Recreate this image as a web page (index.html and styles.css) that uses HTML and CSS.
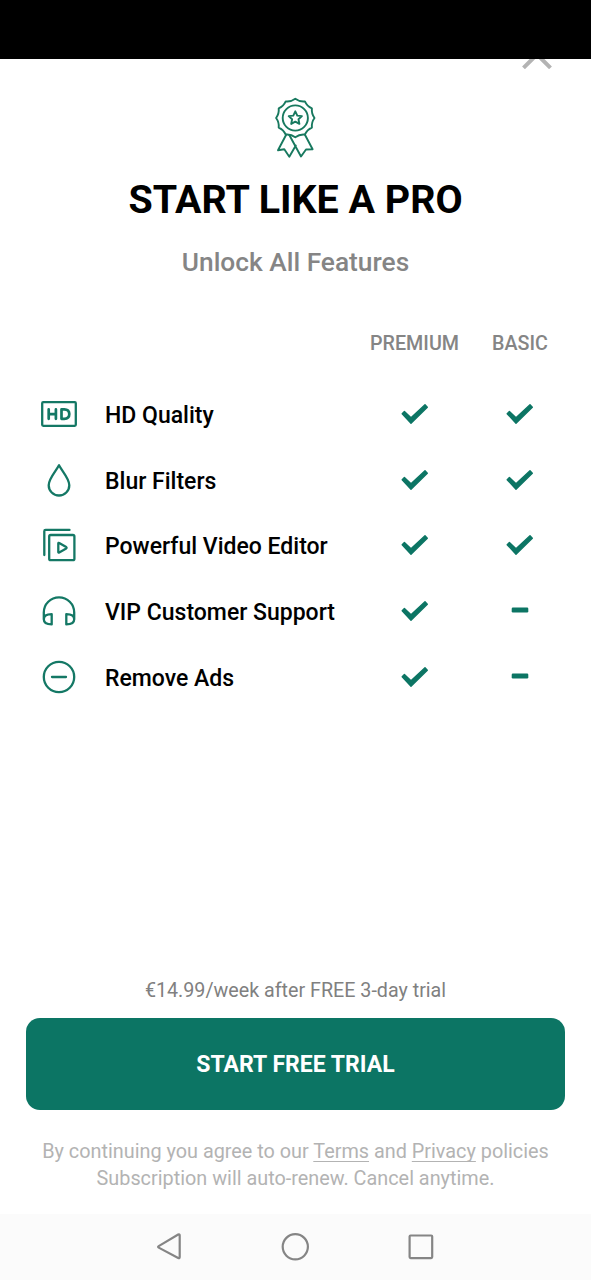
FILE: index.html
```html
<!DOCTYPE html>
<html lang="en">
<head>
<meta charset="utf-8">
<title>Start like a pro</title>
<link rel="stylesheet" href="styles.css">
</head>
<body>
<svg class="defs" aria-hidden="true">
  <symbol id="check" viewBox="0 0 28 22"><path d="M1.200 10.700 3.400 8.500 10 14.700 24 1.700 26.300 4.200 10 20.200Z" fill="currentColor" stroke="currentColor" stroke-width="1.400" stroke-linejoin="round"/></symbol>
  <symbol id="dash" viewBox="0 0 28 22"><rect x="5.700" y="7.500" width="16.600" height="5" rx="1.200" fill="currentColor"/></symbol>
</svg>
<div class="screen">
  <div class="status"></div>
  <div class="closebar"><svg class="close" viewBox="0 0 30 10"><path d="M1.500 8.800 15 -4.500 28.500 8.800" /></svg></div>
  <main class="content">
    <svg class="medal" viewBox="-21.300 -21 42 62">
      <path d="M0-19.200Q4.300-16.040 9.600-16.600Q11.740-11.740 16.600-9.600Q16.040-4.300 19.200 0Q16.040 4.300 16.600 9.600Q11.740 11.740 9.600 16.600Q4.300 16.040 0 19.200Q-4.300 16.040-9.600 16.600Q-11.740 11.740-16.600 9.600Q-16.040 4.300-19.200 0Q-16.040-4.300-16.600-9.600Q-11.740-11.740-9.600-16.600Q-4.300-16.040 0-19.200Z"/>
      <circle r="12.600"/>
      <path d="M0-6.700 2-2.400 6.600-1.900 3.200 1.300 4.100 5.900 0 3.600-4.100 5.900-3.200 1.300-6.600-1.900-2-2.400Z"/>
      <path d="M-9 16.500-17.300 32.300-11 31.300-6 38.800 .500 27.500M9.500 16.500 17.300 31.300 10.700 31.500 5.700 38.500-6 17"/>
    </svg>
    <h1 class="title">START LIKE A PRO</h1>
    <p class="subtitle">Unlock All Features</p>
    <div class="row head"><span class="spacer"></span><span>PREMIUM</span><span>BASIC</span></div>
    <div class="row">
      <svg class="icon" viewBox="0 0 40 40"><rect x="3.200" y="8.200" width="33.600" height="23.600" rx="1"/><path class="bold" d="M9.700 15.400v9.400M16.900 15.400v9.400M9.700 20.100h7.200M22.500 15.400v9.400h2.800q5 0 5-4.700t-5-4.700z"/></svg>
      <span class="label">HD Quality</span><svg class="mark"><use href="#check"/></svg><svg class="mark"><use href="#check"/></svg>
    </div>
    <div class="row">
      <svg class="icon" viewBox="0 0 40 40"><path d="M20 5.300C17 11 9.700 18.500 9.700 25.200A10.300 10.300 0 0 0 30.300 25.200C30.300 18.500 23 11 20 5.300Z"/></svg>
      <span class="label">Blur Filters</span><svg class="mark"><use href="#check"/></svg><svg class="mark"><use href="#check"/></svg>
    </div>
    <div class="row">
      <svg class="icon" viewBox="0 0 40 40"><path d="M5.300 30V6.200Q5.300 4.900 6.600 4.900H30.500"/><rect x="10.200" y="10" width="25.200" height="25.200" rx="1.500"/><path d="M19.300 18.500v8.400q0 1 .9.500l7-4q.8-.7 0-1.300l-7-4.100q-.9-.5-.9.500z"/></svg>
      <span class="label">Powerful Video Editor</span><svg class="mark"><use href="#check"/></svg><svg class="mark"><use href="#check"/></svg>
    </div>
    <div class="row">
      <svg class="icon" viewBox="0 0 40 40"><path d="M4.800 28.500V21.500a15.200 15.200 0 0 1 30.400 0V28.500M12.700 23.200v10.200q-7.900 0-7.900-5.100 0-5.100 7.900-5.100zM27.300 23.200v10.200q7.900 0 7.900-5.100 0-5.100-7.900-5.100z"/></svg>
      <span class="label">VIP Customer Support</span><svg class="mark"><use href="#check"/></svg><svg class="mark"><use href="#dash"/></svg>
    </div>
    <div class="row">
      <svg class="icon" viewBox="0 0 40 40"><circle cx="20" cy="20" r="15.200"/><path d="M13 20h14"/></svg>
      <span class="label">Remove Ads</span><svg class="mark"><use href="#check"/></svg><svg class="mark"><use href="#dash"/></svg>
    </div>
  </main>
  <footer class="footer">
    <p class="price">€14.99/week after FREE 3-day trial</p>
    <button class="cta">START FREE TRIAL</button>
    <p class="legal">By continuing you agree to our <a>Terms</a> and <a>Privacy</a> policies<br>Subscription will auto-renew. Cancel anytime.</p>
  </footer>
  <nav class="nav">
    <svg viewBox="0 0 30 30"><path d="M3.700 14.100 23.200 2.500Q24.700 2 24.700 3.500V25Q24.700 26.700 23.200 26L3.700 15.600Q2.500 14.800 3.700 14.100Z"/></svg>
    <svg viewBox="0 0 30 30"><circle cx="15.300" cy="14.800" r="12.600"/></svg>
    <svg viewBox="0 0 30 30"><rect x="3.600" y="3.500" width="22.600" height="22.600" rx="1"/></svg>
  </nav>
</div>
</body>
</html>
```
FILE: styles.css
```css
* { box-sizing: border-box; }
body { margin: 0; background: #fff; font-family: Roboto, "Liberation Sans", sans-serif; }
h1, p { margin: 0; }
.defs { display: none; }
.screen { width: 591px; height: 1280px; display: flex; flex-direction: column; overflow: hidden; }
.status { height: 59px; background: #000; }
.closebar { height: 10px; display: flex; justify-content: flex-end; padding-right: 39px; }
.close { width: 30px; height: 10px; fill: none; stroke: #b3b3b3; stroke-width: 4; }
.content { flex: 1; display: flex; flex-direction: column; }
.medal { width: 42px; height: 62px; margin: 28px 0 0 274px; fill: none; stroke: #18795f; stroke-width: 1.900; stroke-linejoin: round; stroke-linecap: round; }
.title { margin-top: 18px; text-align: center; font-size: 39.400px; line-height: 46px; font-weight: 700; white-space: nowrap; }
.subtitle { margin-top: 24px; text-align: center; font-size: 26.300px; line-height: 30px; font-weight: 500; color: #858585; }
.row { display: grid; grid-template-columns: 66px 1fr 106px 105px; align-items: center; justify-items: center; height: 65.700px; margin: 0 18.500px 0 26px; color: #0c7564; }
.head { height: 24px; margin-top: 54px; margin-bottom: 26px; font-size: 19.700px; font-weight: 500; color: #858585; }
.spacer { grid-column: span 2; }
.icon { width: 40px; height: 40px; fill: none; stroke: #147865; stroke-width: 2.300; stroke-linecap: round; stroke-linejoin: round; }
.icon .bold { stroke-width: 2.700; }
.label { justify-self: start; padding: 4px 0 0 13px; font-size: 23px; line-height: 28px; font-weight: 500; color: #000; white-space: nowrap; }
.mark { width: 28px; height: 22px; }
.footer { padding: 0 26px; text-align: center; }
.price { font-size: 19.700px; line-height: 24px; color: #808080; }
.cta { display: block; width: 100%; height: 92px; margin-top: 15px; border: 0; border-radius: 14px; background: #0c7564; color: #fff; font: 700 23px Roboto, "Liberation Sans", sans-serif; }
.legal { margin: 28px -20px 22px; font-size: 19.830px; line-height: 27px; color: #b3b3b3; white-space: nowrap; }
.legal a { text-decoration: underline; text-decoration-thickness: 1px; text-underline-offset: 3px; text-decoration-skip-ink: none; }
.nav { height: 66px; padding-right: 1px; background: #fbfbfb; display: flex; align-items: center; justify-content: center; gap: 95.500px; }
.nav svg { width: 30px; height: 30px; fill: none; stroke: #858585; stroke-width: 2.200; stroke-linejoin: round; }
```
